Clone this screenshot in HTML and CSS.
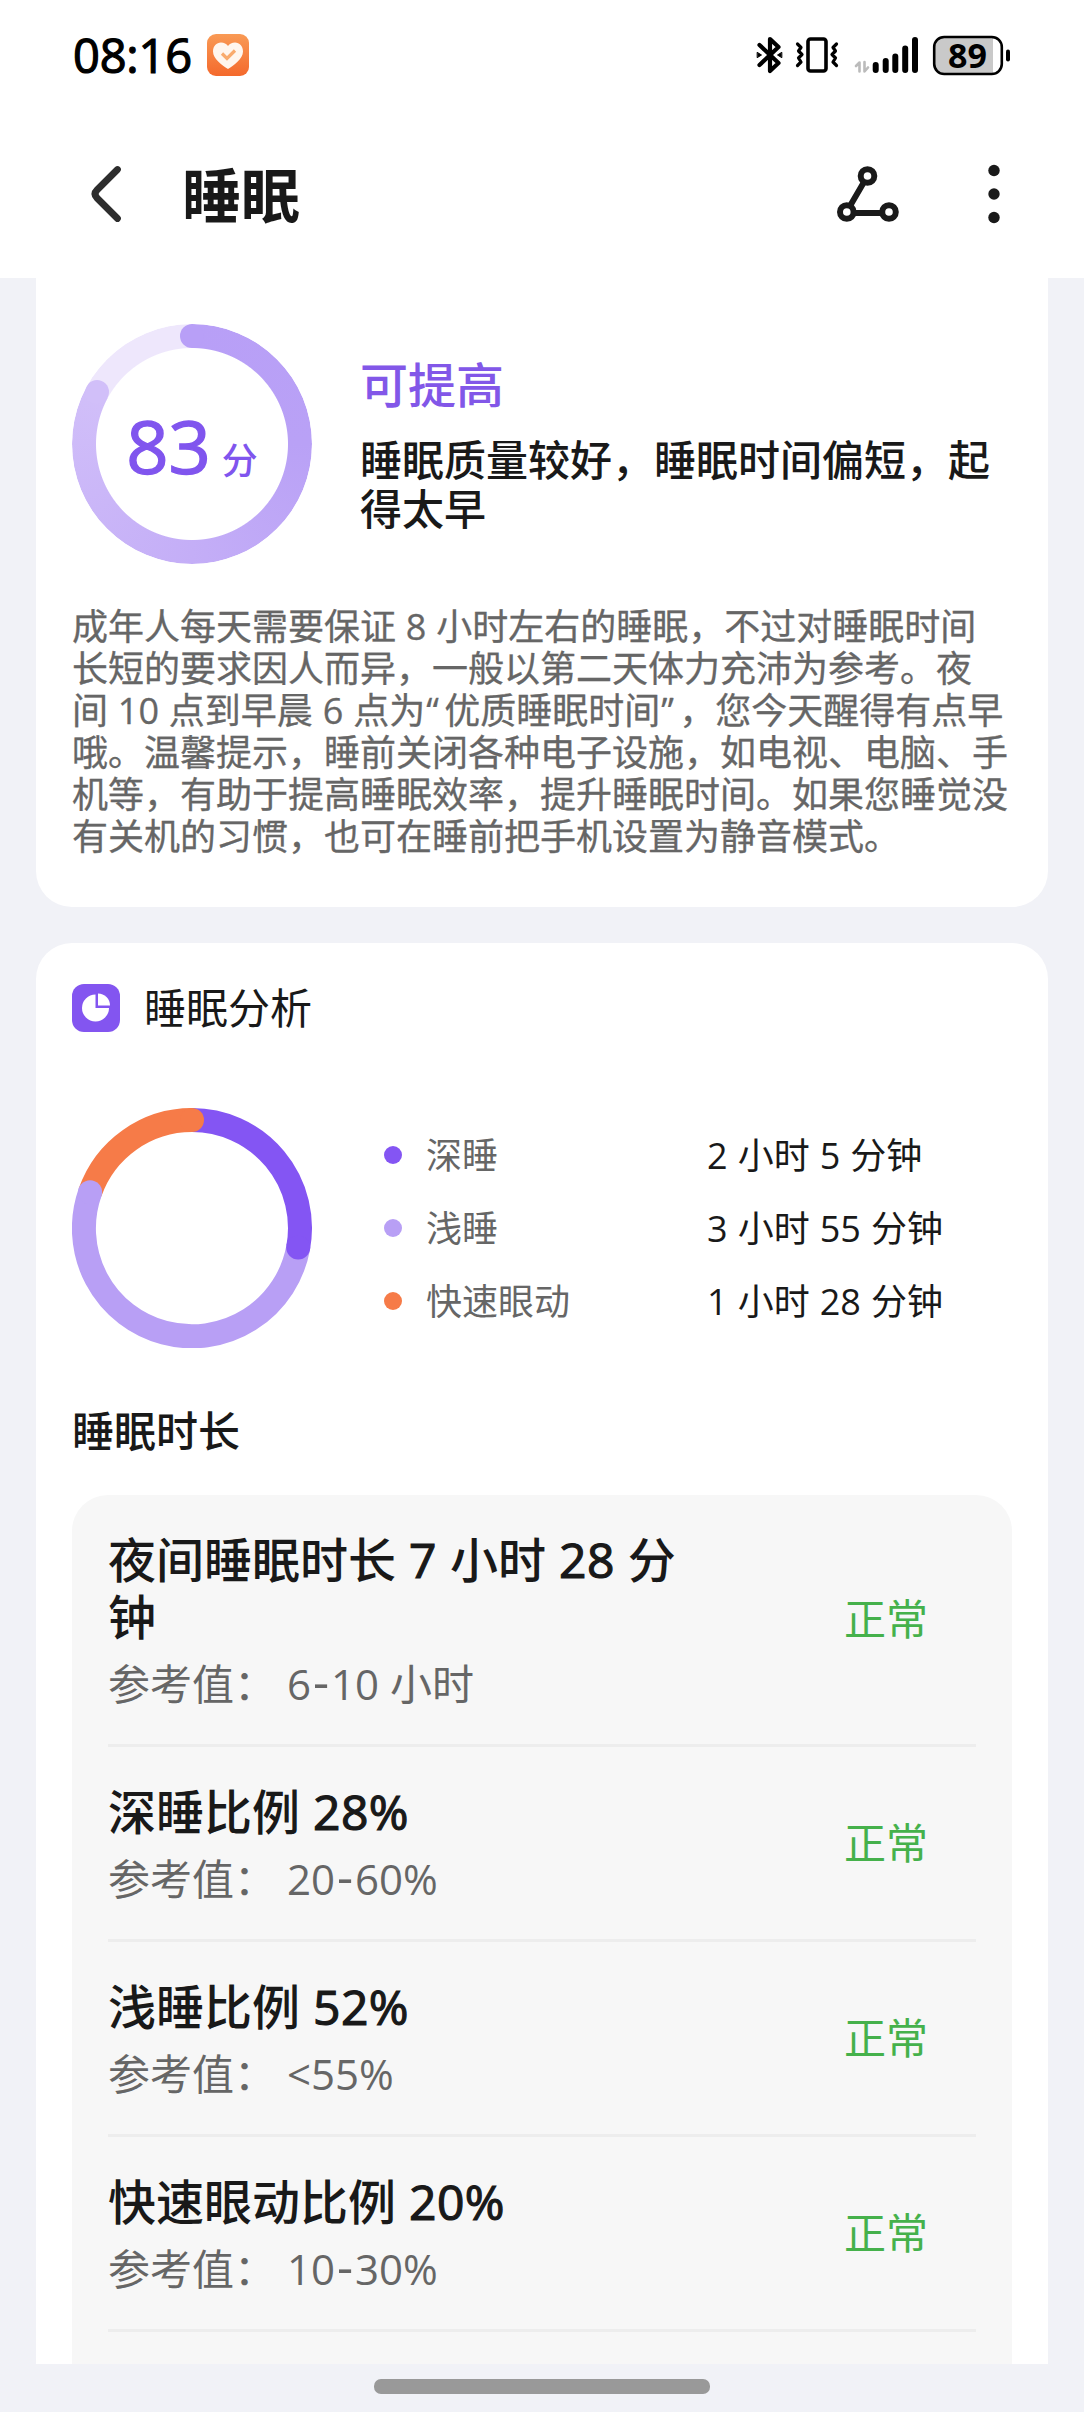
FILE: index.html
```html
<!DOCTYPE html>
<html lang="zh-CN">
<head>
<meta charset="utf-8">
<title>睡眠</title>
<link rel="stylesheet" href="styles.css">
</head>
<body>
<div class="screen">
  <header class="top">
    <div class="status">
      <span class="clock">08:16</span>
      <svg class="app-badge" width="42" height="42" viewBox="0 0 42 42">
        <defs><linearGradient id="badge" x1="0" y1="0" x2="0" y2="1"><stop offset="0" stop-color="#f99a55"/><stop offset="1" stop-color="#f4692c"/></linearGradient></defs>
        <rect width="42" height="42" rx="9" fill="url(#badge)"/>
        <path d="M21 35C15 31 6 25 6 17.500C6 12 9.500 8.500 14 8.500C17 8.500 19.500 9.800 21 12C22.500 9.800 25 8.500 28 8.500C32.500 8.500 36 12 36 17.500C36 25 27 31 21 35Z" fill="#fff6ee"/>
        <path d="M15 19.500l5 5 8-8" fill="none" stroke="#f9ab6d" stroke-width="3.200"/>
      </svg>
      <svg class="status-icons" width="254" height="42" viewBox="757 35 254 42">
        <g fill="none" stroke="#000" stroke-linecap="round" stroke-linejoin="round">
          <path d="M759.500 46l19 18-8.500 8V40l8.500 8-19 18" stroke-width="4.200"/>
          <path d="M757.500 53.500l4 2.500-4 2.500zM781.500 53.500l-4 2.500 4 2.500z" fill="#000" stroke-width="1"/>
          <rect x="808" y="40" width="18" height="32" rx="2.500" stroke-width="3.600"/>
          <path d="M797.500 45l3.500 3.500-2.500 3.500 3.500 3.500-3.500 3.500 2.500 4-3.500 3.500M836.500 45l-3.500 3.500 2.500 3.500-3.500 3.500 3.500 3.500-2.500 4 3.500 3.500" stroke-width="3.200"/>
          <path d="M875.700 66v5M885.700 62v9M895.300 57.500v13.500M905.200 49.500v21.500M915 41v30" stroke-width="6"/>
          <path d="M859.500 72.500V63.500l-3.500 3.500M864.500 63v9.500l3.500-4" stroke="#bbb" stroke-width="2.600"/>
        </g>
        <path d="M944 38h49v37h-49q-10 0-10-10V48q0-10 10-10z" fill="#c9c9c9"/>
        <rect x="934.200" y="38" width="67.600" height="37" rx="10" fill="none" stroke="#000" stroke-width="2.600"/>
        <rect x="1006" y="50.500" width="4" height="12" rx="2"/>
        <text class="battery-level" x="967.500" y="69.300" text-anchor="middle">89</text>
      </svg>
    </div>
    <nav class="appbar">
      <svg class="back" width="36" height="60" viewBox="88 165 36 60"><path d="M117.500 170.500L97 191q-4 4 0 8l20.500 20.500" fill="none" stroke="#2d2d2d" stroke-width="6.800" stroke-linecap="round"/></svg>
      <h1 class="page-title">睡眠</h1>
      <svg class="share" width="64" height="60" viewBox="836 164 64 60">
        <g fill="none" stroke="#1a1a1a" stroke-width="6"><circle cx="867.500" cy="176" r="6.800"/><circle cx="846.800" cy="212" r="6.800"/><circle cx="889" cy="212" r="6.800"/><path d="M864 182l-14 24M853 213h30"/></g>
      </svg>
      <svg class="more" width="12" height="60" viewBox="988 164 12 60"><g fill="#1a1a1a"><circle cx="994" cy="170.500" r="5.700"/><circle cx="994" cy="194" r="5.700"/><circle cx="994" cy="217.500" r="5.700"/></g></svg>
    </nav>
  </header>

  <main class="content">
    <section class="card score-card">
      <div class="summary">
        <div class="score">
          <div class="score-ring"></div>
          <div class="score-value"><span class="score-number">83</span><span class="score-unit">分</span></div>
        </div>
        <div class="verdict">
          <h2 class="verdict-title">可提高</h2>
          <p class="verdict-text">睡眠质量较好，睡眠时间偏短，起<br>得太早</p>
        </div>
      </div>
      <p class="advice">成年人每天需要保证 8 小时左右的睡眠，不过对睡眠时间<br>长短的要求因人而异，一般以第二天体力充沛为参考。夜<br>间 10 点到早晨 6 点为<span class="quote">“</span>优质睡眠时间<span class="quote">”</span>，您今天醒得有点早<br>哦。温馨提示，睡前关闭各种电子设施，如电视、电脑、手<br>机等，有助于提高睡眠效率，提升睡眠时间。如果您睡觉没<br>有关机的习惯，也可在睡前把手机设置为静音模式。</p>
    </section>

    <section class="card analysis-card">
      <div class="section-head">
        <svg width="48" height="48" viewBox="0 0 48 48">
          <rect width="48" height="48" rx="12" fill="#8355f0"/>
          <path d="M23.500 10.500A13.500 13.500 0 1 0 37 24H23.500Z" fill="#fff"/>
          <path d="M26 9.500A12 12 0 0 1 38 21.500H26Z" fill="#fff"/>
        </svg>
        <h2 class="section-title">睡眠分析</h2>
      </div>
      <div class="stages">
        <svg class="donut" width="240" height="240" viewBox="-120 -120 240 240">
          <g fill="none" stroke-width="24">
            <path d="M-101.900 -35.700A108 108 0 0 1 0 -108" stroke="#f67b48"/>
            <path d="M106.200 19.500A108 108 0 1 1 -101.900 -35.700" stroke="#b89ff5"/>
            <path d="M0 -108A108 108 0 0 1 106.200 19.500" stroke="#8455f3"/>
          </g>
          <circle cx="106.200" cy="19.500" r="12" fill="#8455f3"/>
          <circle cx="-101.900" cy="-35.700" r="12" fill="#b89ff5"/>
          <circle cx="0" cy="-108" r="12" fill="#f67b48"/>
        </svg>
        <ul class="legend">
          <li class="legend-row"><i class="dot deep"></i><span class="legend-name">深睡</span><span class="legend-time">2 小时 5 分钟</span></li>
          <li class="legend-row"><i class="dot light"></i><span class="legend-name">浅睡</span><span class="legend-time">3 小时 55 分钟</span></li>
          <li class="legend-row"><i class="dot rem"></i><span class="legend-name">快速眼动</span><span class="legend-time">1 小时 28 分钟</span></li>
        </ul>
      </div>
      <h3 class="subheading">睡眠时长</h3>
      <ul class="metrics">
        <li class="metric"><div class="metric-body"><p class="metric-title">夜间睡眠时长 <b class="num">7</b> 小时 <b class="num">28</b> 分<br>钟</p><p class="metric-ref">参考值： 6<span class="dash">-</span>10 小时</p></div><span class="metric-state">正常</span></li>
        <li class="metric"><div class="metric-body"><p class="metric-title">深睡比例 <b class="num">28%</b></p><p class="metric-ref">参考值： 20<span class="dash">-</span>60%</p></div><span class="metric-state">正常</span></li>
        <li class="metric"><div class="metric-body"><p class="metric-title">浅睡比例 <b class="num">52%</b></p><p class="metric-ref">参考值： &lt;55%</p></div><span class="metric-state">正常</span></li>
        <li class="metric"><div class="metric-body"><p class="metric-title">快速眼动比例 <b class="num">20%</b></p><p class="metric-ref">参考值： 10<span class="dash">-</span>30%</p></div><span class="metric-state">正常</span></li>
      </ul>
    </section>
  </main>
  <footer class="gesture"><div class="handle"></div></footer>
</div>
</body>
</html>
```
FILE: styles.css
```css
* { box-sizing: border-box; margin: 0; padding: 0; }

body {
  background: #f1f2f7;
  color: #191919;
  font-family: "Open Sans", "Noto Sans CJK SC", sans-serif;
  text-spacing-trim: space-all;
}

ul { list-style: none; }
svg { display: block; flex: none; }

.screen {
  display: flex;
  flex-direction: column;
  width: 1084px;
  height: 2412px;
  overflow: hidden;
}

/* status bar and title bar */
.top { flex: none; height: 278px; background: #fff; }

.status {
  display: flex;
  align-items: center;
  height: 110px;
  padding: 0 73px;
}
.clock {
  width: 134px;
  font-size: 47px;
  font-weight: 400;
  -webkit-text-stroke: 1.2px #000;
  letter-spacing: -0.2px;
  line-height: 64px;
  color: #000;
  white-space: nowrap;
}
.status-icons { margin-left: auto; overflow: visible; }
.battery-level { font-size: 34px; font-weight: 700; }

.appbar {
  display: flex;
  align-items: center;
  height: 168px;
  padding: 0 84px 0 88px;
}
.page-title {
  margin-left: 58px;
  padding-top: 2px;
  font-size: 59px;
  font-weight: 700;
  line-height: 84px;
}
.share { margin-left: auto; }
.more { margin-left: 88px; }

/* scrolling area */
.content {
  display: flex;
  flex-direction: column;
  gap: 36px;
  height: 2086px;
  flex: none;
  padding: 0 36px;
  overflow: hidden;
}
.card { flex: none; padding: 0 36px; background: #fff; }

.score-card {
  padding-top: 46px;
  padding-bottom: 49px;
  border-radius: 0 0 36px 36px;
}
.summary { display: flex; align-items: center; gap: 48px; }

.score { display: grid; width: 240px; height: 240px; flex: none; }
.score > * { grid-area: 1 / 1; }
.score-ring {
  position: relative;
  border-radius: 50%;
  background: conic-gradient(#b89ff7 0, #b9a1f6 90deg, #c4aef7 180deg, #d1bff9 298.8deg, #eee7fc 298.8deg);
  mask: radial-gradient(circle, transparent 95.5px, #000 96.5px);
}
.score-ring::before,
.score-ring::after {
  content: "";
  position: absolute;
  width: 24px;
  height: 24px;
  border-radius: 50%;
}
.score-ring::before { left: 108px; top: 0; background: #b89ff7; }
.score-ring::after { left: 13.4px; top: 56px; background: #d1bff9; }

.score-value {
  display: flex;
  align-items: baseline;
  justify-content: center;
  padding-top: 77px;
  color: #8055ee;
}
.score-number { font-size: 74px; font-weight: 400; -webkit-text-stroke: 1.4px #8055ee; line-height: 90px; }
.score-unit { margin-left: 11px; font-size: 36px; font-weight: 500; line-height: 48px; }

.verdict-title {
  margin: 1px 0 21px;
  font-size: 48px;
  font-weight: 500;
  line-height: 58px;
  color: #8257e8;
}
.verdict-text { font-size: 42px; font-weight: 500; line-height: 49px; white-space: nowrap; }

.advice {
  margin-top: 42px;
  font-size: 36px;
  line-height: 42px;
  word-spacing: 0.5px;
  -webkit-text-stroke: 0.3px #666;
  color: #666;
  white-space: nowrap;
}
.quote { margin-left: 1px; letter-spacing: 5.5px; }

/* sleep analysis */
.analysis-card { padding-top: 41px; border-radius: 36px 36px 0 0; }
.section-head { display: flex; align-items: center; gap: 24px; height: 48px; }
.section-title { font-size: 42px; font-weight: 400; line-height: 48px; }

.stages { display: flex; margin-top: 76px; }
.legend { display: flex; flex-direction: column; padding: 10px 0 0 72px; }
.legend-row {
  display: grid;
  grid-template-columns: 18px 281px auto;
  column-gap: 0;
  align-items: center;
  height: 73px;
  font-size: 36px;
  line-height: 48px;
  word-spacing: 0.7px;
  white-space: nowrap;
}
.legend-row .legend-name { padding: 3px 0 0 24px; color: #666; }
.legend-row .legend-time { padding: 3px 0 0 24px; }
.dot { width: 18px; height: 18px; border-radius: 50%; }
.deep { background: #8455f3; }
.light { background: #b89ff5; }
.rem { background: #f67b48; }

.subheading { margin-top: 58px; font-size: 42px; font-weight: 500; line-height: 50px; }

.metrics {
  margin-top: 39px;
  padding: 0 36px 60px;
  border-radius: 36px 36px 0 0;
  background: #f7f7f7;
}
.metric {
  display: flex;
  align-items: center;
  justify-content: space-between;
  padding: 36px 48px 37px 0;
  border-bottom: 3px solid #ededed;
}
.metric-title { font-size: 48px; font-weight: 500; line-height: 57px; word-spacing: 0.6px; white-space: nowrap; }
.num { font-weight: 400; -webkit-text-stroke: 1.2px #191919; letter-spacing: 0.4px; }
.metric-ref { margin-top: 15px; margin-bottom: -1px; font-size: 42px; line-height: 48px; color: #666; white-space: nowrap; }
.dash { margin: 0 2px; font-size: 50px; line-height: 0; }
.metric-state { font-size: 42px; line-height: 48px; color: #45b14b; }

/* gesture bar */
.gesture { display: flex; justify-content: center; padding-top: 15px; }
.handle { width: 336px; height: 15px; border-radius: 7px; background: #999; }
```
